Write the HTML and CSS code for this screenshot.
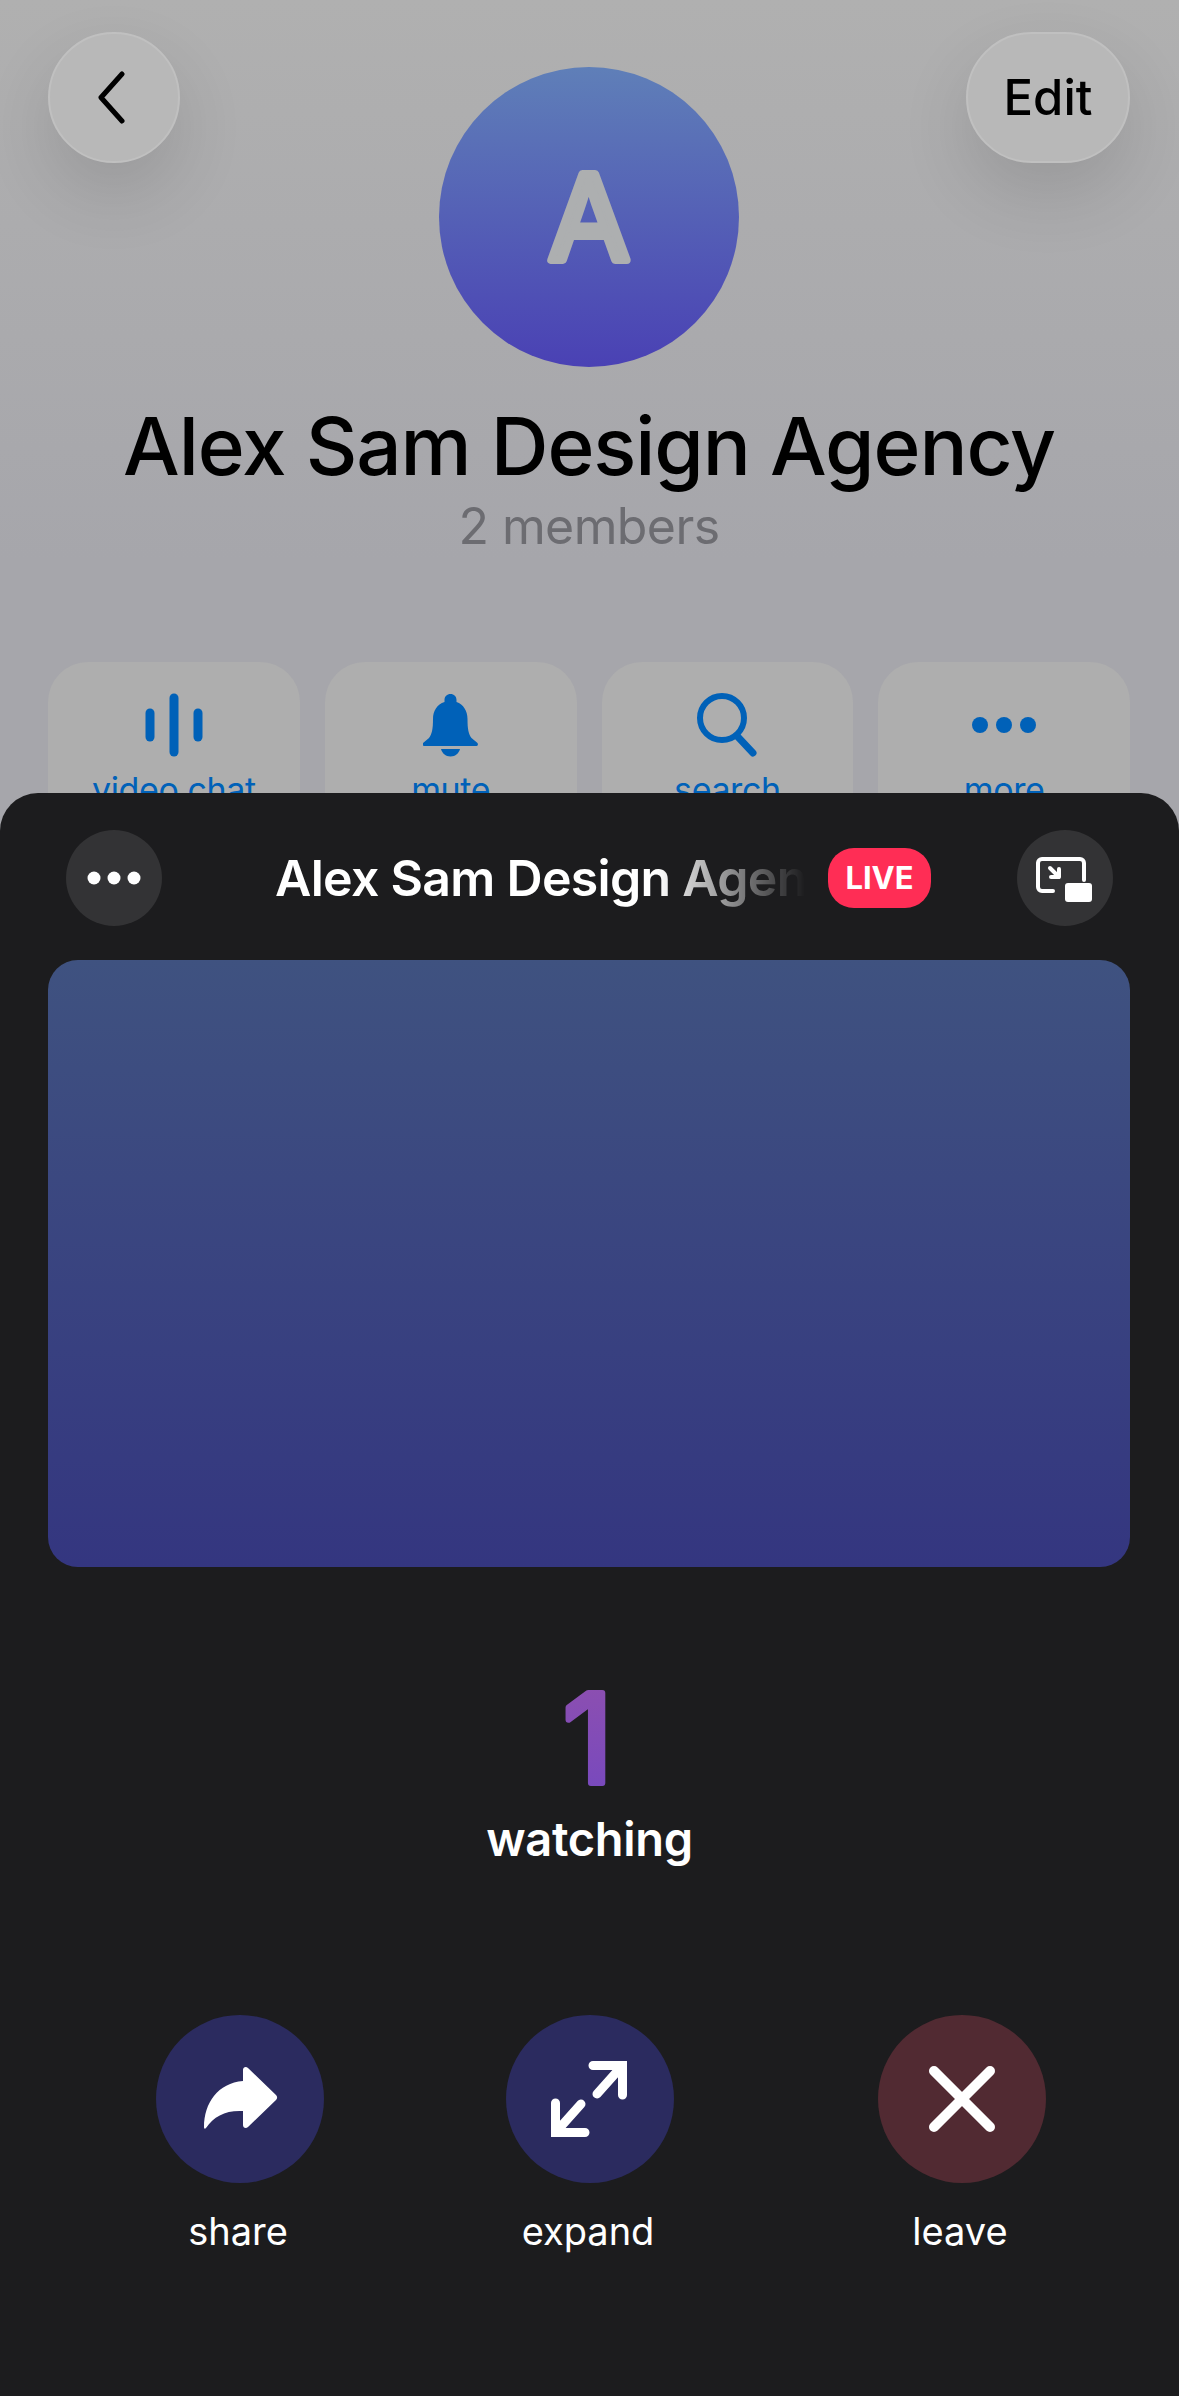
FILE: index.html
```html
<!DOCTYPE html>
<html lang="en">
<head>
  <meta charset="UTF-8">
  <title>Alex Sam Design Agency</title>
  <link rel="stylesheet" href="styles.css">
</head>
<body>
  <div class="page">
    <section class="profile">
      <div class="top-row">
        <button class="glass back-btn">
          <svg width="27" height="53" viewBox="0 0 27 53"><path d="M24 3 3 26.5 24 50" fill="none" stroke="#000" stroke-width="5" stroke-linecap="round" stroke-linejoin="round"/></svg>
        </button>
        <div class="avatar">
          <svg width="300" height="300" viewBox="0 0 300 300"><text class="avatar-letter" x="150" y="193" text-anchor="middle">A</text></svg>
        </div>
        <button class="glass edit-btn">Edit</button>
      </div>
      <h1 class="group-name">Alex Sam Design Agency</h1>
      <p class="members">2 members</p>

      <div class="tiles">
        <div class="tile">
          <div class="tile-icon">
            <svg width="58" height="64" viewBox="0 0 58 64"><g fill="none" stroke="#0061b8" stroke-width="9" stroke-linecap="round"><path d="M5 20v24"/><path d="M29 5v54"/><path d="M53 20v24"/></g></svg>
          </div>
          <span class="tile-label">video chat</span>
        </div>
        <div class="tile">
          <div class="tile-icon">
            <svg width="55" height="63" viewBox="0 0 55 63"><path fill="#0061b8" d="M27.5 0c3.5 0 6 2.500 6 6v2c7 2.500 11 9 11 17 0 10 1 15 4 19l6 5c1 2 0 3-2 3H2c-2 0-3-1-2-3l6-5c3-4 4-9 4-19 0-8 4-14.500 11.500-17V6c0-3.500 2.500-6 6-6z"/><path fill="#0061b8" d="M18 55h19c-1 4-4.500 7.500-9.500 7.500S19 59 18 55z"/></svg>
          </div>
          <span class="tile-label">mute</span>
        </div>
        <div class="tile">
          <div class="tile-icon">
            <svg width="62" height="64" viewBox="0 0 62 64"><g fill="none" stroke="#0061b8" stroke-width="6" stroke-linecap="round"><circle cx="26" cy="25" r="22"/><path d="M42 44 57 60" stroke-width="7"/></g></svg>
          </div>
          <span class="tile-label">search</span>
        </div>
        <div class="tile">
          <div class="tile-icon">
            <svg width="64" height="16" viewBox="0 0 64 16" fill="#0061b8"><circle cx="8" cy="8" r="8"/><circle cx="32" cy="8" r="8"/><circle cx="56" cy="8" r="8"/></svg>
          </div>
          <span class="tile-label">more</span>
        </div>
      </div>
    </section>

    <section class="sheet">
      <header class="sheet-head">
        <button class="round-btn">
          <svg width="96" height="96" viewBox="0 0 96 96" fill="#fff"><circle cx="28" cy="48" r="6.500"/><circle cx="48" cy="48" r="6.500"/><circle cx="68" cy="48" r="6.500"/></svg>
        </button>
        <div class="sheet-title">Alex Sam Design Agency</div>
        <span class="live">LIVE</span>
        <button class="round-btn pip-btn">
          <svg width="96" height="96" viewBox="0 0 96 96">
            <path d="M36 61H25a4 4 0 0 1-4-4V33a4 4 0 0 1 4-4h38a4 4 0 0 1 4 4v17" fill="none" stroke="#fff" stroke-width="4" stroke-linecap="round"/>
            <path d="M33 38l9 9M42 39v8h-8" fill="none" stroke="#fff" stroke-width="4" stroke-linecap="round" stroke-linejoin="round"/>
            <rect x="48" y="53" width="27" height="19" rx="3" fill="#fff"/>
          </svg>
        </button>
      </header>

      <div class="video"></div>

      <div class="viewers">
        <svg class="count" width="168" height="110" viewBox="0 0 168 110">
          <defs>
            <linearGradient id="countFill" x1="0" y1="0" x2="0" y2="1">
              <stop offset="0" stop-color="#9050ae"/>
              <stop offset="1" stop-color="#7448c0"/>
            </linearGradient>
          </defs>
          <text class="count-digit" x="82" y="100" text-anchor="middle">1</text>
        </svg>
        <div class="watching">watching</div>
      </div>

      <div class="actions">
        <div class="action share">
          <div class="action-circle">
            <svg width="168" height="168" viewBox="0 0 168 168"><path fill="#fff" d="M87 55c0-3 3-4 5-2l28 27c1.500 1.500 1.500 3.500 0 5L92 112c-2 2-5 1-5-2V96C70 95 58 101 50 113c-1 1-2 1-2-1 0-24 14-44 39-46z"/></svg>
          </div>
          <span class="action-label">share</span>
        </div>
        <div class="action expand">
          <div class="action-circle">
            <svg width="168" height="168" viewBox="0 0 168 168"><g fill="none" stroke="#fff" stroke-width="9" stroke-linecap="round"><path d="M87 50.500h29.500V80"/><path d="M116 51 91 79"/><path d="M79 117.500H49.500V88"/><path d="M50 117 75 89"/></g></svg>
          </div>
          <span class="action-label">expand</span>
        </div>
        <div class="action leave">
          <div class="action-circle">
            <svg width="168" height="168" viewBox="0 0 168 168"><g fill="none" stroke="#fff" stroke-width="10" stroke-linecap="round"><path d="M56 56l56 56"/><path d="M112 56l-56 56"/></g></svg>
          </div>
          <span class="action-label">leave</span>
        </div>
      </div>
    </section>
  </div>
</body>
</html>
```

FILE: styles.css
```css
html, body {
  margin: 0;
  padding: 0;
}

body {
  background-color: #a6a6ab;
  font-family: Inter, "Liberation Sans", sans-serif;
}

button {
  font-family: inherit;
  border: none;
  padding: 0;
}

.page {
  position: relative;
  width: 1179px;
  height: 2396px;
  overflow: hidden;
}

/* group profile behind the sheet */
.profile {
  height: 793px;
  padding: 32px 49px 0 48px;
  box-sizing: border-box;
  background: linear-gradient(#b0b0b0, #a6a6ab 560px);
}

.top-row {
  display: grid;
  grid-template-columns: 1fr 300px 1fr;
  align-items: start;
}

.glass {
  display: flex;
  align-items: center;
  justify-content: center;
  height: 131px;
  border-radius: 66px;
  background-color: #b8b8b8;
  border: 2px solid #c0c0c0;
  box-sizing: border-box;
  box-shadow: 0 30px 70px rgba(0, 0, 0, 0.12);
}

.back-btn {
  width: 132px;
  padding-right: 6px;
}

.edit-btn {
  justify-self: end;
  width: 164px;
  color: #000;
  font-size: 49px;
  font-weight: 500;
}

.avatar {
  width: 300px;
  height: 300px;
  margin-top: 35px;
  border-radius: 50%;
  background: linear-gradient(#5f7fb8, #4a41b4);
}

.avatar svg {
  display: block;
}

.avatar-letter {
  font-size: 118px;
  font-weight: 400;
  fill: #adafb0;
  stroke: #adafb0;
  stroke-width: 8px;
  stroke-linejoin: round;
}

.group-name {
  margin: 30px 0 0;
  color: #000;
  font-size: 80px;
  font-weight: 500;
  letter-spacing: -1.1px;
  line-height: 98px;
  text-align: center;
  white-space: nowrap;
}

.members {
  margin: 0;
  color: #6c6c71;
  font-size: 50px;
  letter-spacing: -0.6px;
  line-height: 62px;
  text-align: center;
}

.tiles {
  display: flex;
  gap: 25px;
  margin-top: 105px;
}

.tile {
  flex: 1;
  height: 200px;
  border-radius: 40px;
  background-color: #aeaeae;
  padding-top: 31px;
  box-sizing: border-box;
  text-align: center;
}

.tile-icon {
  display: flex;
  align-items: center;
  justify-content: center;
  height: 64px;
}

.tile-label {
  display: block;
  margin-top: 13px;
  color: #0061b8;
  font-size: 34px;
  letter-spacing: -0.4px;
  line-height: 40px;
}

/* dark call sheet */
.sheet {
  position: absolute;
  left: 0;
  right: 0;
  top: 793px;
  bottom: 0;
  background-color: #1c1c1e;
  border-radius: 38px 38px 0 0;
}

.sheet-head {
  display: flex;
  align-items: center;
  padding: 37px 66px 0;
}

.round-btn {
  flex: none;
  width: 96px;
  height: 96px;
  border-radius: 50%;
  background-color: #333335;
}

.round-btn svg {
  display: block;
}

.sheet-title {
  width: 530px;
  margin: 0 23px 0 113px;
  overflow: hidden;
  color: #fff;
  font-size: 50px;
  font-weight: 600;
  letter-spacing: -0.7px;
  white-space: nowrap;
  -webkit-mask-image: linear-gradient(90deg, #000 72%, transparent 100%);
  mask-image: linear-gradient(90deg, #000 72%, transparent 100%);
}

.live {
  width: 103px;
  height: 60px;
  border-radius: 26px;
  background-color: #ff2d55;
  color: #fff;
  font-size: 31px;
  font-weight: 700;
  line-height: 60px;
  text-align: center;
}

.pip-btn {
  margin-left: auto;
}

.video {
  height: 607px;
  margin: 34px 49px 0 48px;
  border-radius: 30px;
  background: linear-gradient(#3f5280, #343680);
}

.viewers {
  margin-top: 116px;
  text-align: center;
}

.count {
  display: block;
  margin: 0 auto;
}

.count-digit {
  font-size: 124px;
  font-weight: 400;
  fill: url(#countFill);
  stroke: url(#countFill);
  stroke-width: 6px;
  stroke-linejoin: round;
}

.watching {
  margin-top: 16px;
  color: #fff;
  font-size: 47px;
  font-weight: 600;
  letter-spacing: -0.3px;
  line-height: 60px;
}

.actions {
  display: flex;
  margin-top: 146px;
  padding-left: 156px;
}

.action {
  width: 168px;
  text-align: center;
}

.expand {
  margin-left: 182px;
}

.leave {
  margin-left: 204px;
}

.action-circle {
  height: 168px;
  border-radius: 50%;
  background-color: #2b2b5f;
}

.action-circle svg {
  display: block;
}

.leave .action-circle {
  background-color: #512a32;
}

.action-label {
  display: block;
  margin-top: 25px;
  padding-right: 4px;
  color: #fff;
  font-size: 38px;
  line-height: 46px;
}
```
